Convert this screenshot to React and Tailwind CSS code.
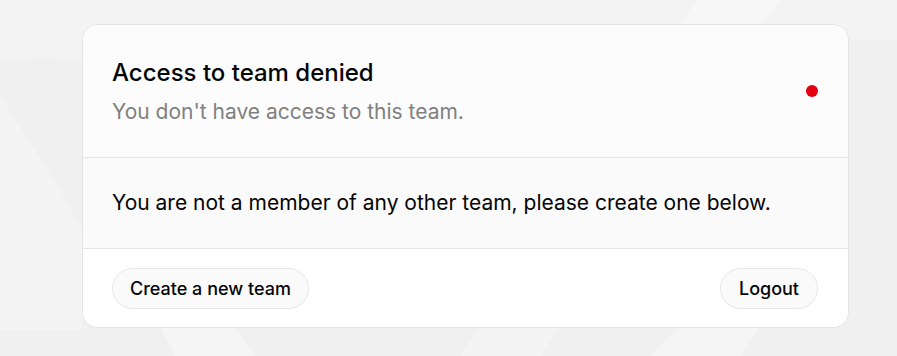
import React from "react";

function Backdrop() {
  return (
    <svg className="absolute inset-0 h-full w-full" viewBox="0 0 897 356" preserveAspectRatio="none">
      <rect x="0" y="0" width="897" height="356" fill="#f0f0f0" />
      <polygon points="0,0 897,0 897,40 0,60" fill="#f3f3f3" />
      <polygon points="697,0 782,0 760,24 680,24" fill="#f7f7f7" />
      <polygon points="0,95 60,190 82,230 82,330 0,330" fill="#f4f4f4" />
      <polygon points="160,327 235,327 255,356 175,356" fill="#f5f5f5" />
      <polygon points="480,327 560,327 540,356 460,356" fill="#f4f4f4" />
      <polygon points="680,327 760,327 740,356 650,356" fill="#f5f5f5" />
    </svg>
  );
}

export default function App() {
  return (
    <div className="relative h-[356px] w-[897px] overflow-hidden bg-[#f0f0f0] font-['Inter',sans-serif]">
      <Backdrop />
      <div className="relative ml-[82px] mt-[24px] w-[767px] overflow-hidden rounded-2xl border border-[#e4e4e4] bg-white">
        <div className="flex h-[132px] items-center justify-between bg-[#fcfcfc] pl-[29px] pr-[30px]">
          <div className="flex flex-col">
            <h1 className="text-[24px] font-medium leading-[32px] text-[#050505]">Access to team denied</h1>
            <p className="mt-[9px] text-[21px] leading-[28px] text-[#808080]">You don't have access to this team.</p>
          </div>
          <span className="h-[12px] w-[12px] rounded-full bg-[#e5000f]" />
        </div>
        <div className="flex h-[91px] items-center border-t border-[#e6e6e6] bg-[#fafafa] pl-[29px] pr-[30px]">
          <p className="text-[21px] leading-[28px] text-[#050505]">You are not a member of any other team, please create one below.</p>
        </div>
        <div className="flex h-[79px] items-center justify-between border-t border-[#e6e6e6] bg-white pl-[29px] pr-[30px]">
          <button className="h-[41px] rounded-full border border-[#e6e6e6] bg-[#fafafa] px-[17px] text-[18px] font-medium text-[#050505]">Create a new team</button>
          <button className="h-[41px] rounded-full border border-[#e6e6e6] bg-[#fafafa] px-[18px] text-[18px] font-medium text-[#050505]">Logout</button>
        </div>
      </div>
    </div>
  );
}
